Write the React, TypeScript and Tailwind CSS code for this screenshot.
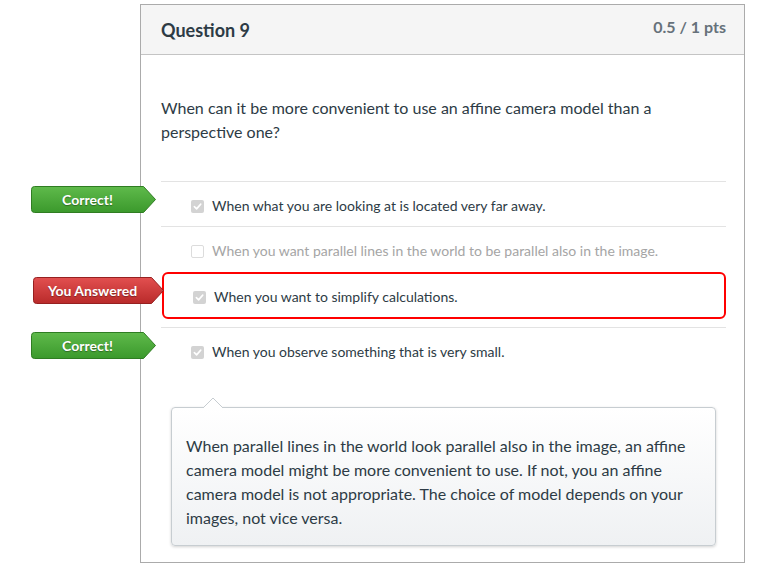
import React from 'react';

type Answer = {
  text: string;
  checked: boolean;
  muted?: boolean;
  badge?: 'correct' | 'answered';
  selected?: boolean;
};

const answers: Answer[] = [
  { text: 'When what you are looking at is located very far away.', checked: true, badge: 'correct' },
  { text: 'When you want parallel lines in the world to be parallel also in the image.', checked: false, muted: true },
  { text: 'When you want to simplify calculations.', checked: true, badge: 'answered', selected: true },
  { text: 'When you observe something that is very small.', checked: true, badge: 'correct' },
];

// Arrow-shaped result flag shown to the left of an answer
function Badge({ kind }: { kind: 'correct' | 'answered' }) {
  const green = kind === 'correct';
  const w = green ? 125 : 131;
  const h = 27;
  const tip = 12;
  const id = green ? 'g-correct' : 'g-answered';
  return (
    <div className="relative" style={{ width: w, height: h }}>
      <svg width={w} height={h} className="absolute inset-0">
        <defs>
          <linearGradient id={id} x1="0" y1="0" x2="0" y2="1">
            <stop offset="0" stopColor={green ? '#5fba4b' : '#e25050'} />
            <stop offset="1" stopColor={green ? '#3b992c' : '#b92a2a'} />
          </linearGradient>
        </defs>
        <path
          d={`M3.5 0.5 H${w - tip - 0.5} L${w - 0.5} ${h / 2} L${w - tip - 0.5} ${h - 0.5} H3.5 Q0.5 ${h - 0.5} 0.5 ${h - 3.5} V3.5 Q0.5 0.5 3.5 0.5 Z`}
          fill={`url(#${id})`}
          stroke={green ? '#2f7d22' : '#962020'}
          strokeWidth="1"
        />
      </svg>
      <div
        className="relative flex h-full items-center justify-center text-[14px] font-bold text-white"
        style={{ width: w - tip, textShadow: '0 1px 1px rgba(0,0,0,0.35)' }}
      >
        {green ? 'Correct!' : 'You Answered'}
      </div>
    </div>
  );
}

function Checkbox({ checked, muted }: { checked: boolean; muted?: boolean }) {
  if (!checked) {
    return <div className={`h-[13px] w-[13px] rounded-[2px] border bg-white ${muted ? 'border-[#dcdcdc]' : 'border-[#bbb]'}`} />;
  }
  return (
    <div className="flex h-[13px] w-[13px] items-center justify-center rounded-[2px] bg-[#d3d3d3]">
      <svg width="9" height="9" viewBox="0 0 10 10">
        <path d="M1.5 5.2 L4 7.6 L8.6 2.4" fill="none" stroke="#fff" strokeWidth="1.8" strokeLinecap="round" strokeLinejoin="round" />
      </svg>
    </div>
  );
}

function AnswerLine({ a }: { a: Answer }) {
  return (
    <div className="flex items-center gap-2 leading-[20px]">
      <Checkbox checked={a.checked} muted={a.muted} />
      <span className={`text-[14px] ${a.muted ? 'text-[#a5a5a5]' : 'text-[#2d3b45]'}`}>{a.text}</span>
    </div>
  );
}

export default function App() {
  return (
    <div className="h-[579px] w-[764px] bg-white pt-[4px]" style={{ fontFamily: 'Lato, "Noto Sans", sans-serif' }}>
      <div className="ml-[140px] w-[605px] h-[559px] border border-[#ababab]">
        {/* Header */}
        <div className="flex h-[50px] items-start justify-between border-b border-[#c4c4c4] bg-[#f5f5f5] pl-5 pr-[18px]">
          <div className="pt-[13px] text-[18px] font-bold leading-[24px] text-[#2d3b45]">Question 9</div>
          <div className="pt-[10px] text-[16px] font-bold leading-[24px] text-[#66717a]">0.5 / 1 pts</div>
        </div>

        <div className="pl-5 pr-[18px]">
          <p className="pt-[41px] text-[16px] leading-[24px] text-[#2d3b45]">
            When can it be more convenient to use an affine camera model than a perspective one?
          </p>

          <div className="mt-[37px]">
            {/* Row 1 */}
            <div className="relative h-[45px] border-t border-[#e3e3e3] pl-[30px] pt-[14px]">
              <div className="absolute left-[-130px] top-[4px]">
                <Badge kind="correct" />
              </div>
              <AnswerLine a={answers[0]} />
            </div>
            {/* Row 2 */}
            <div className="relative h-[46px] border-t border-[#e3e3e3] pl-[30px] pt-[14px]">
              <AnswerLine a={answers[1]} />
            </div>
            {/* Row 3: selected answer */}
            <div className="relative ml-[1px] h-[47px] rounded-[6px] border-2 border-[#ff0000] pl-[29px] pt-[13px]">
              <div className="absolute left-[-131px] top-[3px]">
                <Badge kind="answered" />
              </div>
              <AnswerLine a={answers[2]} />
            </div>
            {/* Row 4 */}
            <div className="relative mt-[8px] h-[45px] border-t border-[#e3e3e3] pl-[30px] pt-[14px]">
              <div className="absolute left-[-130px] top-[4px]">
                <Badge kind="correct" />
              </div>
              <AnswerLine a={answers[3]} />
            </div>
          </div>

          {/* Feedback comment */}
          <div className="relative ml-[10px] mr-[10px] mt-[35px] h-[139px] rounded-[4px] border border-[#c7cdd1] bg-gradient-to-b from-white to-[#eff1f3] pl-[14px] pr-3 pt-[26px] shadow-[0_1px_3px_rgba(0,0,0,0.18)]">
            <svg width="20" height="11" className="absolute left-[31px] top-[-11px]">
              <path d="M0 11 L10 1 L20 11" fill="#fff" stroke="#c7cdd1" strokeWidth="1" />
            </svg>
            <p className="text-[16px] leading-[24px] text-[#2d3b45]">
              When parallel lines in the world look parallel also in the image, an affine camera model might be more convenient to use. If not, you an affine camera model is not appropriate. The choice of model depends on your images, not vice versa.
            </p>
          </div>
        </div>
      </div>
    </div>
  );
}
